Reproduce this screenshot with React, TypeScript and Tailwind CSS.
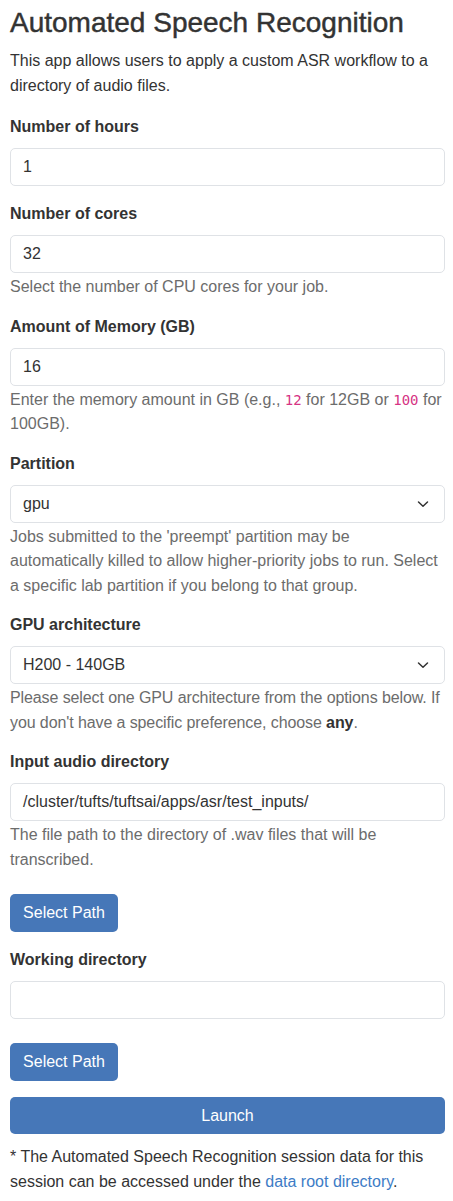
import React from "react";

const font = { fontFamily: '"Liberation Sans", Arial, Helvetica, sans-serif' };
const mono = { fontFamily: '"DejaVu Sans Mono", "Liberation Mono", monospace' };

function Chevron() {
  return (
    <svg width="12" height="8" viewBox="0 0 12 8" className="absolute right-[15px] top-1/2 -translate-y-1/2" fill="none">
      <path d="M1.5 2 L6 6.2 L10.5 2" stroke="#333" strokeWidth="1.5" strokeLinecap="round" strokeLinejoin="round" />
    </svg>
  );
}

function Label({ children }: { children: React.ReactNode }) {
  return <label className="block font-bold mb-[9px] leading-6 text-[#333]">{children}</label>;
}

function Input({ value }: { value: string }) {
  return (
    <div className="h-[38px] w-full border border-[#dfe2e6] rounded-[5px] bg-white px-3 flex items-center text-[#333]">
      {value}
    </div>
  );
}

function Select({ value }: { value: string }) {
  return (
    <div className="relative h-[38px] w-full border border-[#dfe2e6] rounded-[5px] bg-white px-3 flex items-center text-[#333]">
      {value}
      <Chevron />
    </div>
  );
}

function Help({ children, tight }: { children: React.ReactNode; tight?: boolean }) {
  return (
    <div className={"mt-[2px] text-[#6c6c6c] leading-[24.5px] " + (tight ? "tracking-[-0.1px]" : "")}>
      {children}
    </div>
  );
}

function Btn({ children, full }: { children: React.ReactNode; full?: boolean }) {
  return (
    <div
      className={
        "rounded-[5px] bg-[#4677b8] text-white flex items-center justify-center " +
        (full ? "w-full h-[37px]" : "w-[108px] h-[38px]")
      }
    >
      {children}
    </div>
  );
}

export default function App() {
  return (
    <div className="bg-white min-h-[1201px] w-[453px] pl-[10px] pr-[8px] pt-[6px] text-[16px] text-[#333]" style={font}>
      <h1 className="text-[28px] leading-[34px] mb-[8px] text-[#333] [-webkit-text-stroke:0.45px_#333]">
        Automated Speech Recognition
      </h1>
      <p className="leading-[25px] mb-[17px]">
        This app allows users to apply a custom ASR workflow to a directory of audio files.
      </p>

      <div className="mb-[16px]">
        <Label>Number of hours</Label>
        <Input value="1" />
      </div>

      <div className="mb-[15px]">
        <Label>Number of cores</Label>
        <Input value="32" />
        <Help>Select the number of CPU cores for your job.</Help>
      </div>

      <div className="mb-[15px]">
        <Label>Amount of Memory (GB)</Label>
        <Input value="16" />
        <Help>
          Enter the memory amount in GB (e.g.,{" "}
          <code className="text-[#d63384] text-[14px] leading-none" style={mono}>12</code> for 12GB or{" "}
          <code className="text-[#d63384] text-[14px] leading-none" style={mono}>100</code> for 100GB).
        </Help>
      </div>

      <div className="mb-[15px]">
        <Label>Partition</Label>
        <Select value="gpu" />
        <Help>
          Jobs submitted to the 'preempt' partition may be automatically killed to allow higher-priority jobs to run. Select a specific lab partition if you belong to that group.
        </Help>
      </div>

      <div className="mb-[15px]">
        <Label>GPU architecture</Label>
        <Select value="H200 - 140GB" />
        <Help tight>
          Please select one GPU architecture from the options below. If you don't have a specific preference, choose{" "}
          <b className="text-[#333]">any</b>.
        </Help>
      </div>

      <div className="mb-[22px]">
        <Label>Input audio directory</Label>
        <Input value="/cluster/tufts/tuftsai/apps/asr/test_inputs/" />
        <Help>The file path to the directory of .wav files that will be transcribed.</Help>
      </div>

      <div className="mb-[16px]">
        <Btn>Select Path</Btn>
      </div>

      <div className="mb-[24px]">
        <Label>Working directory</Label>
        <Input value="" />
      </div>

      <div className="mb-[16px]">
        <Btn>Select Path</Btn>
      </div>

      <Btn full>Launch</Btn>

      <p className="mt-[10px] leading-[25px]">
        * The Automated Speech Recognition session data for this session can be accessed under the{" "}
        <a className="text-[#3d7cc6]">data root directory</a>.
      </p>
    </div>
  );
}
